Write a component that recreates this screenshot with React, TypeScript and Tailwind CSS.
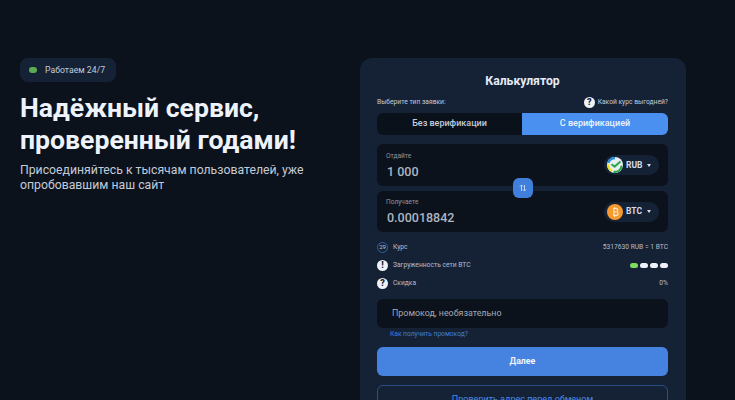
import React from 'react'

function Caret() {
  return <span className="ml-[5px] h-0 w-0 border-x-[2.5px] border-t-[3px] border-x-transparent border-t-[#d5dcea]" />
}

function SberIcon() {
  return (
    <svg width="16" height="16" viewBox="0 0 17 17" className="shrink-0">
      <circle cx="8.5" cy="8.5" r="8.5" fill="#e8edf2" />
      <path d="M8.5 1.2A7.3 7.3 0 0 0 1.6 6.2" fill="none" stroke="#1f8fd8" strokeWidth="2.2" />
      <path d="M1.4 7.5a7.3 7.3 0 0 0 4.2 7.3" fill="none" stroke="#f0e01e" strokeWidth="2.2" />
      <path d="M7 15.7a7.3 7.3 0 0 0 8.6-6.6" fill="none" stroke="#2aa84a" strokeWidth="2.2" />
      <path d="M4.8 7.6l3.3 2.6 6.2-5.4" fill="none" stroke="#2aa84a" strokeWidth="2.1" />
    </svg>
  )
}

function BtcIcon() {
  return (
    <svg width="16" height="16" viewBox="0 0 16 16" className="shrink-0">
      <circle cx="8" cy="8" r="8" fill="#f79a2e" />
      <path d="M6 4.4h2.8c1.2 0 1.9.6 1.9 1.6 0 .8-.5 1.4-1.3 1.6 1 .1 1.7.8 1.7 1.8 0 1.200-.9 2-2.200 2H6M6.900 4.400v7.600M6.900 7.800h1.900M7.600 3.200v1.200M7.600 12v1" fill="none" stroke="#fbe3c4" strokeWidth="1.200" />
    </svg>
  )
}

function CurrencyPill({ code, icon }: { code: string; icon: React.ReactNode }) {
  return (
    <div className="flex h-5 w-[55px] items-center rounded-full bg-[#152236] pl-[3px] text-[8.5px] font-bold text-[#d5dcea]">
      {icon}
      <span className="ml-[3px]">{code}</span>
      <Caret />
    </div>
  )
}

function AmountBox({ label, value, code, icon, className }: { label: string; value: string; code: string; icon: React.ReactNode; className: string }) {
  return (
    <div className={`flex items-center justify-between rounded-md bg-[#0b121c] pl-[9px] pr-[9px] ${className}`}>
      <div>
        <div className="text-[6.6px] leading-[10px] text-[#8f97a6]">{label}</div>
        <div className="mt-[3px] pl-[1px] text-[12.5px] font-medium leading-[16px] text-[#aeb5c2]">{value}</div>
      </div>
      <CurrencyPill code={code} icon={icon} />
    </div>
  )
}

function RoundMark({ children }: { children: string }) {
  return (
    <span className="flex h-[11px] w-[11px] shrink-0 items-center justify-center rounded-full bg-[#eef2f8] text-[9px] font-black leading-none text-[#152236]">
      {children}
    </span>
  )
}

function InfoRow({ icon, label, children }: { icon: React.ReactNode; label: string; children: React.ReactNode }) {
  return (
    <div className="flex h-[18px] items-center justify-between text-[6.7px] text-[#b4bccb]">
      <div className="flex items-center gap-[5px]">
        {icon}
        <span>{label}</span>
      </div>
      {children}
    </div>
  )
}

export default function App() {
  return (
    <div className="flex h-[400px] w-[735px] overflow-hidden bg-[#0b121c] font-['Roboto',sans-serif]">
      {/* Left text */}
      <div className="w-[360px] shrink-0 pl-[20px] pt-[58px]">
        <div className="flex h-6 w-[96px] items-center rounded-lg bg-[#152236] pl-[9px] text-[8.7px] leading-none text-[#c2cad8]">
          <span className="h-[6px] w-[8px] rounded-full bg-[#5cab55]" />
          <span className="ml-[8px]">Работаем 24/7</span>
        </div>
        <h1 className="mt-[10px] text-[26.6px] font-bold leading-[32px] text-[#eef3fb]">
          Надёжный сервис,
          <br />
          проверенный годами!
        </h1>
        <p className="mt-[7px] w-[300px] text-[12.25px] leading-[15px] text-[#c4cbd8]">
          Присоединяйтесь к тысячам пользователей, уже опробовавшим наш сайт
        </p>
      </div>

      {/* Calculator */}
      <div className="mt-[58px] h-[400px] w-[326px] shrink-0 rounded-t-xl bg-[#152236] pl-[17px] pr-[18px] pt-[15px]">
        <h2 className="text-center text-[12.2px] font-bold leading-[16px] text-[#e4ebf6]">Калькулятор</h2>

        <div className="mt-[6px] flex h-[14px] items-center justify-between text-[6.7px] text-[#c2cad8]">
          <span>Выберите тип заявки:</span>
          <div className="flex items-center gap-[3px]">
            <RoundMark>?</RoundMark>
            <span>Какой курс выгодней?</span>
          </div>
        </div>

        <div className="mt-[4px] flex h-[22px] overflow-hidden rounded-md text-[9px] font-medium">
          <div className="flex w-[145px] items-center justify-center bg-[#0a111b] text-[#c4cbd8]">Без верификации</div>
          <div className="flex flex-1 items-center justify-center bg-[#4a90f0] text-[#eef3fb]">С верификацией</div>
        </div>

        <div className="relative mt-[9px]">
          <AmountBox label="Отдайте" value="1 000" code="RUB" icon={<SberIcon />} className="h-[42px]" />
          <AmountBox label="Получаете" value="0.00018842" code="BTC" icon={<BtcIcon />} className="mt-[5px] h-[41px]" />
          <div className="absolute left-[136px] top-[34px] flex h-5 w-5 items-center justify-center rounded-md bg-[#4080dc] text-[#c9dcf6]">
            <svg width="8" height="8" viewBox="0 0 8 8" fill="none" stroke="currentColor" strokeWidth="0.900">
              <path d="M2.500 7V1M1 2.500l1.500-1.500L4 2.500M5.500 1v6M4 5.500L5.500 7 7 5.500" />
            </svg>
          </div>
        </div>

        <div className="mt-[6px]">
          <InfoRow
            label="Курс"
            icon={
              <span className="flex h-[11px] w-[11px] items-center justify-center rounded-full border border-[#2a62ad] text-[6px] leading-none text-[#c2cad8]">
                29
              </span>
            }
          >
            <span>5317630 RUB = 1 BTC</span>
          </InfoRow>
          <InfoRow label="Загруженность сети BTC" icon={<RoundMark>!</RoundMark>}>
            <div className="flex gap-[2px]">
              <span className="h-[5px] w-2 rounded-full bg-[#7fdc5f]" />
              <span className="h-[5px] w-2 rounded-full bg-[#eef2f8]" />
              <span className="h-[5px] w-2 rounded-full bg-[#eef2f8]" />
              <span className="h-[5px] w-2 rounded-full bg-[#eef2f8]" />
            </div>
          </InfoRow>
          <InfoRow label="Скидка" icon={<RoundMark>?</RoundMark>}>
            <span>0%</span>
          </InfoRow>
        </div>

        <div className="mt-[7px] flex h-[29px] items-center rounded-md bg-[#0b121c] pl-[15px] text-[8.9px] text-[#a3a9b5]">
          Промокод, необязательно
        </div>
        <div className="mt-[1px] pl-[13px] text-[6.65px] leading-[10px] text-[#3f7fd8]">Как получить промокод?</div>

        <button className="mt-[8px] flex h-[29px] w-full items-center justify-center rounded-md bg-[#4683e0] text-[8.8px] font-bold text-[#eef3fb]">
          Далее
        </button>
        <button className="mt-[9px] flex h-[29px] w-full items-center justify-center rounded-md border border-[#2a4f85] text-[9px] text-[#4a8ae8]">
          Проверить адрес перед обменом
        </button>
      </div>
    </div>
  )
}
